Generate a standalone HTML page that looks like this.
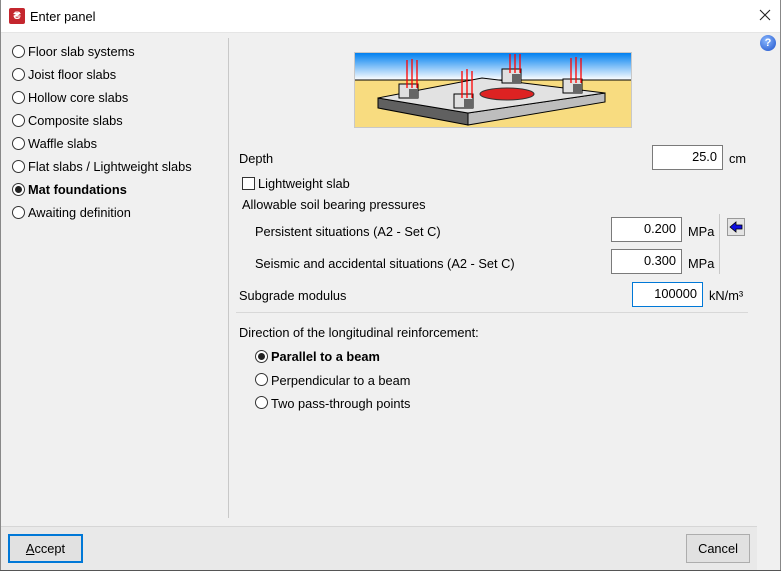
<!DOCTYPE html>
<html><head><meta charset="utf-8"><style>
*{margin:0;padding:0;box-sizing:border-box}
body{width:781px;height:571px;background:#f0f0f0;font-family:"Liberation Sans",sans-serif;font-size:12.8px;color:#000;position:relative;overflow:hidden}
.a{position:absolute;white-space:nowrap}
.r{position:absolute;width:13px;height:13px;border:1px solid #333;border-radius:50%;background:#fff}
.r.on::after{content:"";position:absolute;left:2px;top:2px;width:7px;height:7px;border-radius:50%;background:#222}
.in{position:absolute;background:#fff;border:1px solid #7a7a7a;text-align:right;padding-right:5px;line-height:22px;height:25px}
</style></head><body>
<div class="a" style="left:0;top:0;width:781px;height:33px;background:#fff;border-bottom:1px solid #e5e5e5"></div>
<div class="a" style="left:9px;top:8px;width:16px;height:16px;background:#c4262e;border-radius:2px;color:#fff;font-size:11px;font-weight:bold;text-align:center;line-height:16px">₴</div>
<div class="a" style="left:30px;top:9px">Enter panel</div>
<svg class="a" style="left:759px;top:9px" width="12" height="12"><path d="M1 1L11 11M11 1L1 11" stroke="#222" stroke-width="1.1"/></svg>
<div class="a" style="left:760px;top:35px;width:16px;height:16px;border-radius:50%;background:radial-gradient(circle at 40% 35%,#8ab8ff,#1a4fc9);color:#fff;font-size:11px;font-weight:bold;text-align:center;line-height:16px">?</div>
<div class="a" style="left:0;top:0;width:1px;height:571px;background:#888"></div>
<div class="a" style="left:780px;top:0;width:1px;height:571px;background:#888"></div>

<div class="r" style="left:12px;top:45px"></div><div class="a" style="left:28px;top:44px">Floor slab systems</div>
<div class="r" style="left:12px;top:68px"></div><div class="a" style="left:28px;top:67px">Joist floor slabs</div>
<div class="r" style="left:12px;top:91px"></div><div class="a" style="left:28px;top:90px">Hollow core slabs</div>
<div class="r" style="left:12px;top:114px"></div><div class="a" style="left:28px;top:113px">Composite slabs</div>
<div class="r" style="left:12px;top:137px"></div><div class="a" style="left:28px;top:136px">Waffle slabs</div>
<div class="r" style="left:12px;top:160px"></div><div class="a" style="left:28px;top:159px">Flat slabs / Lightweight slabs</div>
<div class="r on" style="left:12px;top:183px"></div><div class="a" style="left:28px;top:182px;font-weight:bold">Mat foundations</div>
<div class="r" style="left:12px;top:206px"></div><div class="a" style="left:28px;top:205px">Awaiting definition</div>
<div class="a" style="left:228px;top:38px;width:1px;height:480px;background:#c8c8c8"></div>

<svg class="a" style="left:354px;top:52px" width="278" height="76" viewBox="0 0 278 76">
<defs><linearGradient id="s" x1="0" y1="0" x2="0" y2="1"><stop offset="0" stop-color="#0080f0"/><stop offset="1" stop-color="#fff"/></linearGradient></defs>
<rect x="0.5" y="0.5" width="277" height="75" fill="#f8dc80" stroke="#c8c8c8"/>
<rect x="1" y="1" width="276" height="27" fill="url(#s)"/>
<line x1="1" y1="28" x2="277" y2="28" stroke="#000"/>
<polygon points="24,46 114,61 114,73 24,56" fill="#606060" stroke="#000"/>
<polygon points="114,61 251,41 251,50 114,73" fill="#bdbdbd" stroke="#000"/>
<polygon points="24,46 128,26 251,41 114,61" fill="#e2e2e2" stroke="#000"/>
<ellipse cx="153" cy="42" rx="27" ry="6" fill="#d22" stroke="#333"/>
<g fill="#e0e0e0" stroke="#000"><rect x="45" y="32" width="19" height="14"/><rect x="100" y="42" width="19" height="14"/><rect x="148" y="17" width="19" height="14"/><rect x="209" y="27" width="19" height="14"/></g>
<g fill="#666"><rect x="55" y="37" width="9" height="9"/><rect x="110" y="47" width="9" height="9"/><rect x="158" y="22" width="9" height="9"/><rect x="219" y="32" width="9" height="9"/></g>
<g stroke="red" stroke-width="1.3"><path d="M53 8V36M58 7V36M63 8V36M108 19V46M113 17V46M118 19V46M156 2V21M161 2V21M166 2V21M217 6V31M222 5V31M227 6V31"/></g>
</svg>

<div class="a" style="left:239px;top:151px">Depth</div>
<div class="in" style="left:652px;top:145px;width:71px">25.0</div>
<div class="a" style="left:729px;top:151px">cm</div>
<div class="a" style="left:242px;top:177px;width:13px;height:13px;border:1px solid #333;background:#fff"></div>
<div class="a" style="left:258px;top:176px">Lightweight slab</div>
<div class="a" style="left:242px;top:197px">Allowable soil bearing pressures</div>
<div class="a" style="left:255px;top:224px">Persistent situations (A2 - Set C)</div>
<div class="in" style="left:611px;top:217px;width:71px">0.200</div>
<div class="a" style="left:688px;top:224px">MPa</div>
<div class="a" style="left:255px;top:256px">Seismic and accidental situations (A2 - Set C)</div>
<div class="in" style="left:611px;top:249px;width:71px">0.300</div>
<div class="a" style="left:688px;top:256px">MPa</div>
<div class="a" style="left:719px;top:214px;width:1px;height:60px;background:#c8c8c8"></div>
<div class="a" style="left:727px;top:218px;width:18px;height:18px;border:1px solid #999;background:#e4e4e4"></div>
<svg class="a" style="left:729px;top:221px" width="14" height="12"><polygon points="1,6 7,1 7,4 13,4 13,8 7,8 7,11" fill="#1010e0" stroke="#000" stroke-width="0.8"/></svg>
<div class="a" style="left:239px;top:288px">Subgrade modulus</div>
<div class="in" style="left:632px;top:282px;width:71px;border-color:#0078d7">100000</div>
<div class="a" style="left:709px;top:288px">kN/m³</div>
<div class="a" style="left:236px;top:312px;width:512px;height:1px;background:#d8d8d8"></div>
<div class="a" style="left:239px;top:325px">Direction of the longitudinal reinforcement:</div>
<div class="r on" style="left:255px;top:350px"></div><div class="a" style="left:271px;top:349px;font-weight:bold">Parallel to a beam</div>
<div class="r" style="left:255px;top:373px"></div><div class="a" style="left:271px;top:373px">Perpendicular to a beam</div>
<div class="r" style="left:255px;top:396px"></div><div class="a" style="left:271px;top:396px">Two pass-through points</div>

<div class="a" style="left:1px;top:526px;width:756px;height:1px;background:#d6d6d6"></div>
<div class="a" style="left:1px;top:527px;width:756px;height:43px;background:#e9e9e9"></div>
<div class="a" style="left:8px;top:534px;width:75px;height:29px;border:2px solid #0078d7;background:#e1e1e1;text-align:center;line-height:25px"><u>A</u>ccept</div>
<div class="a" style="left:686px;top:534px;width:64px;height:29px;border:1px solid #adadad;background:#e1e1e1;text-align:center;line-height:27px">Cancel</div>
<div class="a" style="left:0;top:570px;width:781px;height:1px;background:#555"></div>
</body></html>
